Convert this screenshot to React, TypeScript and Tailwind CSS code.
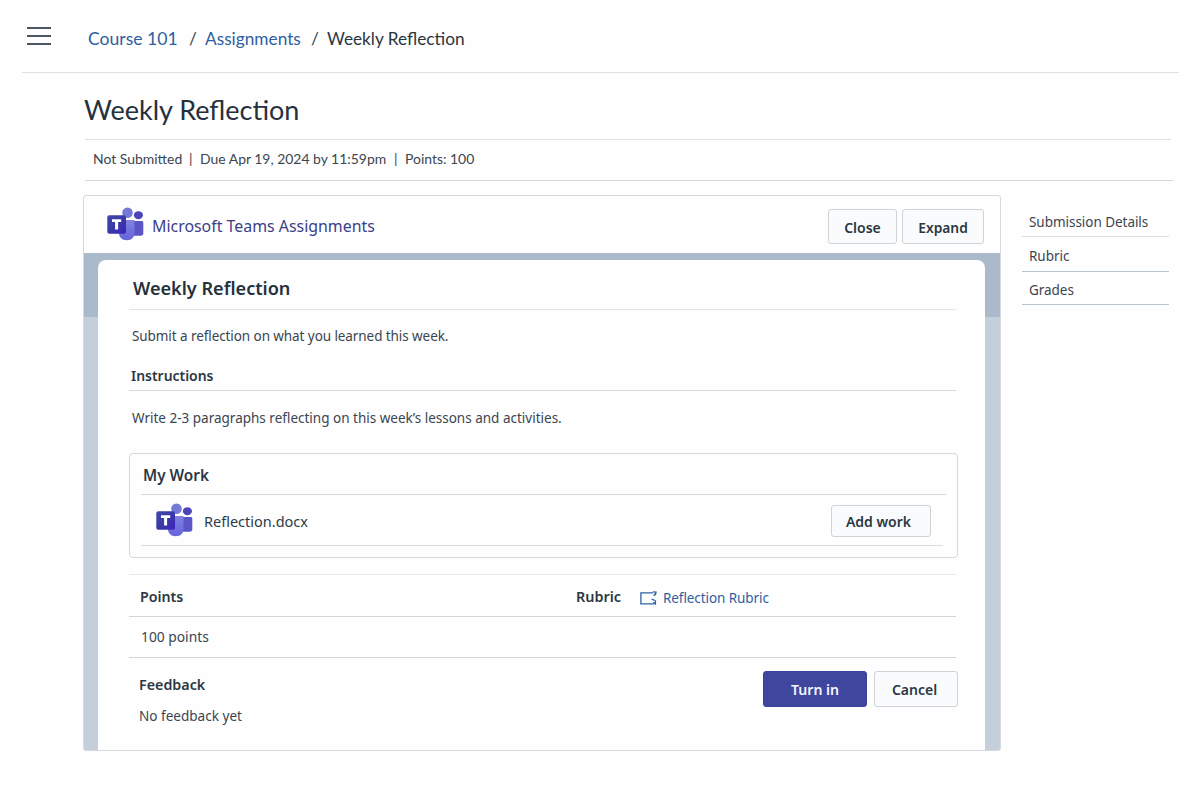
import type { ReactNode } from 'react';

const details = [
  { label: 'Submission Details', row: 'h-[42px] pt-[17px] border-[#d9dee3]' },
  { label: 'Rubric', row: 'h-[35px] pt-[9px] border-[#bcc6cf]' },
  { label: 'Grades', row: 'h-[33px] pt-[8px] border-[#bcc6cf]' },
];

function TeamsLogo({ id }: { id: string }) {
  return (
    <svg width="37" height="34" viewBox="0 0 37 34" className="shrink-0">
      <defs>
        <linearGradient id={`${id}-tile`} x1="0" y1="0" x2="1" y2="1">
          <stop offset="0" stopColor="#4246ad" />
          <stop offset="0.5" stopColor="#393aa6" />
          <stop offset="1" stopColor="#3d23bf" />
        </linearGradient>
        <linearGradient id={`${id}-body`} x1="0" y1="0" x2="0" y2="1">
          <stop offset="0" stopColor="#8083df" />
          <stop offset="1" stopColor="#6664dc" />
        </linearGradient>
      </defs>
      <circle cx="20.5" cy="5.8" r="5.3" fill="#7579d6" />
      <ellipse cx="31.4" cy="8.2" rx="4.5" ry="4" fill="#4b45b8" />
      <path d="M25 14h9.6c1 0 1.7.7 1.7 1.7v10.6c0 1.5-1 2.4-2.5 2.4H25z" fill="#5b56c6" />
      <path d="M12 13h15.5v13.2c0 4.2-3.2 7-7.7 7-4.6 0-7.8-2.8-7.8-7z" fill={`url(#${id}-body)`} />
      <rect x="0.3" y="8.3" width="18.7" height="18.4" rx="2" fill={`url(#${id}-tile)`} />
      <path d="M5 12.2h9.2v2.7h-3.100v7.6H8.100v-7.6H5z" fill="#fff" />
    </svg>
  );
}

function RubricIcon() {
  return (
    <svg width="18" height="15" viewBox="0 0 18 15" fill="none" stroke="#2f63a4" strokeWidth="1.3" className="shrink-0">
      <path d="M13 1.9H.9v10.9h13" />
      <path d="M12.8.9l3.2.3-.6 3M15.4 2.4l-1.7 2.5" />
      <path d="M11.6 8.2l3 1.2M15.4 9.2v4.6M13.2 11.4l2.8 1.8" />
    </svg>
  );
}

function Button({ className, children }: { className: string; children: ReactNode }) {
  return (
    <button className={`rounded-[3px] border border-[#cdd3d9] bg-[#fafbfc] font-semibold text-[#2b3743] ${className}`}>
      {children}
    </button>
  );
}

export default function App() {
  return (
    <div className="h-[800px] w-[1200px] overflow-hidden bg-[#fefefe] font-['Noto_Sans',sans-serif] text-[13.5px] leading-5 text-[#3a4551]">
      {/* Breadcrumb bar */}
      <header className="mr-[21px] ml-[22px] flex h-[73px] items-start border-b border-[#dde0e4] pl-[5px] font-['Lato',sans-serif]">
        <button className="mt-[27px] flex h-[18px] w-6 flex-col justify-between" aria-label="Menu">
          <span className="h-[2px] w-full bg-[#4b5764]" />
          <span className="h-[2px] w-full bg-[#4b5764]" />
          <span className="h-[2px] w-full bg-[#4b5764]" />
        </button>
        <nav className="mt-[27px] ml-[37px] flex text-[17.25px] leading-6 whitespace-nowrap">
          <a className="w-[101px] text-[17.6px] text-[#2f5f9f]">Course 101</a>
          <span className="w-[16px]">/</span>
          <a className="w-[106px] text-[#2f5f9f]">Assignments</a>
          <span className="w-[16px]">/</span>
          <span className="text-[#2b3540]">Weekly Reflection</span>
        </nav>
      </header>

      <main className="ml-[83px]">
        <div className="mr-[29px] ml-[2px] h-[67px] border-b border-[#dde0e3] pt-[19px] font-['Lato',sans-serif]">
          <h1 className="-ml-px text-[27px] leading-9 text-[#25313d]">Weekly Reflection</h1>
        </div>
        <div className="mr-[27px] ml-[2px] flex h-[41px] border-b border-[#d3d7dd] pt-[9px] pl-2 font-['Lato',sans-serif] text-[13.95px] whitespace-nowrap">
          <span className="w-[96px]">Not Submitted</span>
          <span className="w-[11px]">|</span>
          <span className="w-[194px]">Due Apr 19, 2024 by 11:59pm</span>
          <span className="w-[11px]">|</span>
          <span>Points: 100</span>
        </div>

        <div className="flex">
          {/* Embedded Teams panel */}
          <section className="mt-[14px] h-[556px] w-[918px] rounded-[3px] border border-[#d5dae2]">
            <div className="flex h-[57px] pl-[23px]">
              <div className="mt-[11px]">
                <TeamsLogo id="header" />
              </div>
              <h2 className="mt-5 ml-[8px] flex-1 text-[15.9px] text-[#3b3f86]">Microsoft Teams Assignments</h2>
              <Button className="mt-[13px] h-[35px] w-[69px] pt-[2px] text-[14px]">Close</Button>
              <Button className="mt-[13px] mr-4 ml-[5px] h-[35px] w-[82px] pt-[2px] text-[13.8px]">Expand</Button>
            </div>

            <div className="h-[497px] bg-[linear-gradient(#abbacb_64px,#c4cfda_64px)] pt-[7px] pr-[15px] pl-[14px]">
              <div className="h-full rounded-t-[8px] bg-[#fefefe] pr-[27px] pl-[31px]">
                <div className="mr-[2px] h-[50px] border-b border-[#e1e4e8] pt-[16px] pl-1">
                  <h3 className="text-[18.1px] leading-6 font-semibold text-[#25313d]">Weekly Reflection</h3>
                </div>
                <p className="mt-4 pl-[3px] tracking-[-0.08px]">Submit a reflection on what you learned this week.</p>
                <div className="mt-[20px] mr-[2px] h-[25px] border-b border-[#d6dade] pl-[2px]">
                  <h4 className="text-[13.95px] font-semibold text-[#2b3743]">Instructions</h4>
                </div>
                <p className="mt-[17px] pl-[3px]">
                  Write 2-3 paragraphs reflecting on this week’s lessons and activities.
                </p>

                <div className="mt-[25px] h-[105px] rounded-[4px] border border-[#d3d8de] pr-[11px] pl-[11px]">
                  <div className="h-[41px] border-b border-[#d3d8de] pt-[11px] pl-[2px]">
                    <h4 className="text-[15.3px] font-semibold text-[#2b3743]">My Work</h4>
                  </div>
                  <div className="mr-[3px] flex h-[51px] border-b border-[#d9dce1] pl-[15px]">
                    <div className="mt-2">
                      <TeamsLogo id="file" />
                    </div>
                    <span className="mt-[16px] ml-[11px] flex-1 text-[14.5px] text-[#2f3b47]">Reflection.docx</span>
                    <Button className="mt-[10px] mr-3 h-[32px] w-[100px] pt-[2px] pr-[5px] text-[14px]">Add work</Button>
                  </div>
                </div>

                <div className="mt-4 mr-[2px] flex h-[43px] border-y border-t-[#e5e9ed] border-b-[#cfd5db] pt-[12px] pl-[11px]">
                  <h4 className="w-[436px] text-[14.2px] font-semibold text-[#2b3743]">Points</h4>
                  <h4 className="w-[64px] text-[14.4px] font-semibold text-[#2b3743]">Rubric</h4>
                  <a className="flex pt-px tracking-[-0.08px] text-[#2f5f9f]">
                    <span className="mt-[3px] mr-[5px]">
                      <RubricIcon />
                    </span>
                    Reflection Rubric
                  </a>
                </div>
                <div className="mr-[2px] h-[41px] border-b border-[#cfd5db] pt-[10px] pl-3 text-[13.8px]">100 points</div>

                <div className="flex">
                  <div className="flex-1 pt-[17px] pl-[10px]">
                    <h4 className="text-[14.3px] font-semibold text-[#2b3743]">Feedback</h4>
                    <p className="mt-[11px] text-[13.55px]">No feedback yet</p>
                  </div>
                  <button className="mt-[13px] h-[36px] w-[104px] rounded-[3px] border border-[#39419a] bg-[#3e479d] pt-[2px] text-[14.1px] font-semibold text-[#f3f4fb]">
                    Turn in
                  </button>
                  <Button className="mt-[13px] ml-[7px] h-[36px] w-[84px] pt-[2px] pr-[3px] text-[14px]">Cancel</Button>
                </div>
              </div>
            </div>
          </section>

          {/* Right sidebar */}
          <aside className="mt-[14px] ml-[21px] w-[147px] tracking-[-0.04px]">
            {details.map((d) => (
              <div key={d.label} className={`border-b pl-[7px] ${d.row}`}>
                {d.label}
              </div>
            ))}
          </aside>
        </div>
      </main>
    </div>
  );
}
